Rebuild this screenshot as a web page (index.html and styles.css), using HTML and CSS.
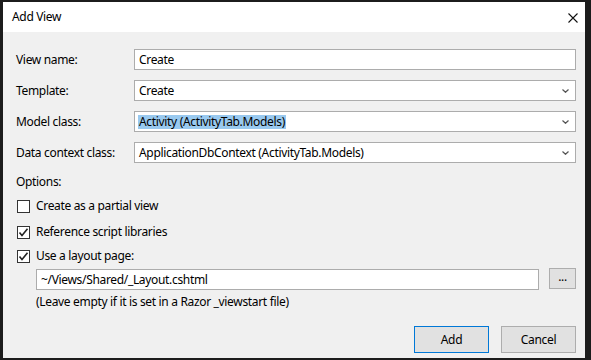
FILE: index.html
```html
<!DOCTYPE html>
<html>
<head>
<meta charset="utf-8">
<link rel="stylesheet" href="styles.css">
</head>
<body>
<div class="dialog">
  <div class="titlebar">
    <span class="title">Add View</span>
    <svg class="close" width="10" height="10" viewBox="0 0 10 10"><path d="M0.5 0.5 L9.5 9.5 M9.5 0.5 L0.5 9.5" stroke="#111" stroke-width="1.1" fill="none"/></svg>
  </div>
  <div class="content">
    <div class="form">
      <label class="lbl">View name:</label>
      <div class="field"><span class="val">Create</span></div>
      <label class="lbl">Template:</label>
      <div class="field select"><span class="val">Create</span><svg class="chev" width="7" height="4" viewBox="0 0 7 4"><path d="M0.5 0.5 L3.5 3.3 L6.5 0.5" stroke="#555" stroke-width="1.2" fill="none"/></svg></div>
      <label class="lbl">Model class:</label>
      <div class="field select"><span class="val sel">Activity (ActivityTab.Models)</span><svg class="chev" width="7" height="4" viewBox="0 0 7 4"><path d="M0.5 0.5 L3.5 3.3 L6.5 0.5" stroke="#555" stroke-width="1.2" fill="none"/></svg></div>
      <label class="lbl">Data context class:</label>
      <div class="field select"><span class="val">ApplicationDbContext (ActivityTab.Models)</span><svg class="chev" width="7" height="4" viewBox="0 0 7 4"><path d="M0.5 0.5 L3.5 3.3 L6.5 0.5" stroke="#555" stroke-width="1.2" fill="none"/></svg></div>
    </div>
    <div class="options">Options:</div>
    <div class="check c1"><span class="box"></span><span>Create as a partial view</span></div>
    <div class="check c2"><span class="box"><svg width="11" height="11" viewBox="0 0 11 11"><path d="M1.5 5.5 L4 8.5 L9.5 1.8" stroke="#222" stroke-width="1.6" fill="none"/></svg></span><span>Reference script libraries</span></div>
    <div class="check c3"><span class="box"><svg width="11" height="11" viewBox="0 0 11 11"><path d="M1.5 5.5 L4 8.5 L9.5 1.8" stroke="#222" stroke-width="1.6" fill="none"/></svg></span><span>Use a layout page:</span></div>
    <div class="pathrow">
      <div class="field path"><span class="val">~/Views/Shared/_Layout.cshtml</span></div>
      <div class="browse">...</div>
    </div>
    <div class="hint">(Leave empty if it is set in a Razor _viewstart file)</div>
    <div class="buttons">
      <div class="btn primary">Add</div>
      <div class="btn">Cancel</div>
    </div>
  </div>
</div>
</body>
</html>
```
FILE: styles.css
```css
html, body {
  margin: 0;
  padding: 0;
}
body {
  background: #1c1c1c;
  width: 591px;
  height: 360px;
  overflow: hidden;
  font-family: "Noto Sans", "Open Sans", sans-serif;
  font-size: 12px;
  letter-spacing: -0.33px;
  color: #000;
  padding: 2px 6px 2px 3px;
  box-sizing: border-box;
}
.dialog {
  width: 582px;
  height: 356px;
  display: flex;
  flex-direction: column;
  background: #f0f0f0;
}
.titlebar {
  height: 30px;
  background: #fff;
  display: flex;
  align-items: center;
  justify-content: space-between;
  padding: 0 7px 0 9px;
  flex-shrink: 0;
}
.title {
  font-size: 12px;
  line-height: 16px;
}
.close {
  display: block;
  margin-top: 1px;
}
.content {
  padding: 17px 9px 0 13px;
  flex: 1;
}
.form {
  display: grid;
  grid-template-columns: 118px 1fr;
  row-gap: 10px;
  align-items: center;
}
.lbl {
  line-height: 16px;
}
.field {
  height: 21px;
  box-sizing: border-box;
  border: 1px solid #acacac;
  background: #fff;
  display: flex;
  align-items: center;
  justify-content: space-between;
  padding: 0 0 0 3px;
}
.val {
  line-height: 14px;
  padding: 0 1px;
}
.val.sel {
  background: #99c9ef;
}
.chev {
  margin-right: 6px;
  display: block;
}
.options {
  margin-top: 11px;
  line-height: 16px;
}
.check {
  display: flex;
  align-items: center;
  gap: 6px;
  line-height: 16px;
  margin-left: 1px;
}
.c1 { margin-top: 8px; }
.c2 { margin-top: 10px; }
.c3 { margin-top: 8px; }
.box {
  width: 13px;
  height: 13px;
  box-sizing: border-box;
  border: 1px solid #333;
  background: #fff;
  display: flex;
  align-items: center;
  justify-content: center;
}
.box svg {
  display: block;
}
.pathrow {
  margin-top: 5px;
  margin-left: 20px;
  display: flex;
  align-items: flex-start;
  gap: 10px;
}
.path {
  width: 503px;
}
.browse {
  width: 27px;
  height: 21px;
  box-sizing: border-box;
  border: 1px solid #adadad;
  background: #e1e1e1;
  margin-top: -1px;
  text-align: center;
  line-height: 16px;
  font-size: 12px;
}
.hint {
  margin-left: 20px;
  margin-top: 4px;
  line-height: 16px;
}
.buttons {
  display: flex;
  justify-content: flex-end;
  gap: 12px;
  margin-top: 16px;
}
.btn {
  width: 75px;
  height: 27px;
  box-sizing: border-box;
  border: 1px solid #adadad;
  background: #e1e1e1;
  display: flex;
  align-items: center;
  justify-content: center;
}
.btn.primary {
  border-color: #0078d7;
}
```
